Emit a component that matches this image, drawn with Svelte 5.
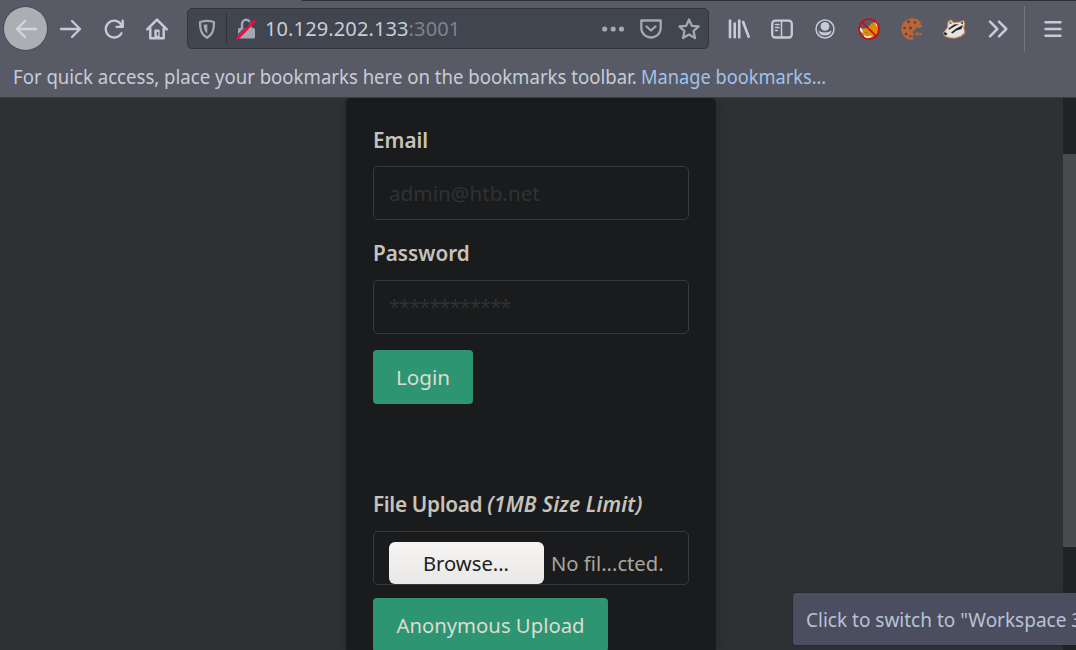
<script>
  const url = { host: '10.129.202.133', port: ':3001' };
</script>

<div class="window">
  <header>
    <div class="tabline"></div>
    <nav>
      <button class="back" aria-label="Back">
        <svg viewBox="0 0 24 24"><path d="M22 12H3M11 4L3 12l8 8" /></svg>
      </button>
      <button class="tool" aria-label="Forward">
        <svg viewBox="0 0 24 24"><path d="M2 12h19M13 4l8 8-8 8" /></svg>
      </button>
      <button class="tool" aria-label="Reload">
        <svg viewBox="0 0 24 24"><path d="M19.5 16.2A8.4 8.4 0 1 1 18.6 6.700M20.700 3.600v6.200h-6.200" /><path class="fill" d="M21.500 4.500v6h-6z" /></svg>
      </button>
      <button class="tool" aria-label="Home">
        <svg viewBox="0 0 24 24"><path d="M2.200 12.400L12 2.600l9.800 9.800M5.300 11.400v9.800h13.400v-9.800" stroke-width="2.500" /><path class="fill" d="M9.300 21v-7.200q0-1.300 1.300-1.300h2.800q1.300 0 1.300 1.300V21z" /><path d="M12.600 15.500v2.400" stroke="#585a66" stroke-width="1.600" /></svg>
      </button>

      <div class="address">
        <span class="shield">
          <svg viewBox="0 0 24 24"><path d="M12 3.800c2 0 4.400.5 7 1.200 0 7-.8 12-7 15.800C5.800 17 5 12 5 5c2.600-.7 5-1.200 7-1.200z" stroke-width="2.300" /><path class="fill" d="M12.300 7.200v9.600C9.500 14.500 8.700 12 8.600 7.800z" /></svg>
        </span>
        <span class="lock">
          <svg viewBox="0 0 24 24"><path d="M8 12V7a4.200 4.200 0 0 1 8.400 0v4" stroke-width="2.500" /><path class="fill" d="M4 12.500q0-1.500 1.500-1.500h14q1.500 0 1.500 1.500V20q0 1.500-1.500 1.500H5.500Q4 21.500 4 20z" /><path d="M3 19L18 3.700" stroke="#404550" stroke-width="1.200" /><path d="M3.500 21.500L20.500 4" stroke="#f00a45" stroke-width="2.600" /></svg>
        </span>
        <span class="host">{url.host}<span>{url.port}</span></span>
        <span class="actions">
          <svg viewBox="0 0 24 24"><g class="fill"><circle cx="3.700" cy="12" r="2.600" /><circle cx="12.200" cy="12" r="2.600" /><circle cx="20.500" cy="12" r="2.600" /></g></svg>
          <svg viewBox="0 0 24 24"><path d="M2.300 3.500h19.400v7.500a9.700 9.500 0 0 1-19.400 0zM7.500 9.500l4.500 4 4.500-4" /></svg>
          <svg viewBox="0 0 24 24"><path d="M12 2.500l2.800 6.300 6.800.7-5.100 4.600 1.500 7-6-3.600-6 3.600 1.500-7-5.100-4.600 6.800-.7z" /></svg>
        </span>
      </div>

      <button class="tool library" aria-label="Library">
        <svg viewBox="0 0 24 24"><path d="M3 2.500v18.700M7.700 5.500v15.700M12.200 2.500v18.700M15.800 4L22 20.700" stroke-width="2.600" stroke-linecap="butt" /></svg>
      </button>
      <button class="tool" aria-label="Sidebar">
        <svg viewBox="0 0 24 24"><rect x="2.200" y="3.700" width="19.600" height="16.800" rx="3" /><path d="M11.500 4v16M5.500 7.500h3.500M5.500 10.500h3.500M5.500 13.500h2" stroke-width="1.500" /></svg>
      </button>
      <button class="tool" aria-label="Account">
        <svg viewBox="0 0 24 24"><circle cx="12" cy="12" r="9" stroke-width="1.500" /><circle class="fill" cx="12" cy="9.400" r="4.400" /><path class="fill" d="M5.500 13.500q2.500 2 6.500 2t6.500-2c-.3 3-2.800 5-6.500 5s-6.200-2-6.500-5z" /></svg>
      </button>
      <button class="tool fox" aria-label="FoxyProxy">
        <svg viewBox="0 0 24 24"><g stroke="none"><path fill="#e08a09" d="M4 12l6-1 5-5 5-1 1 6-.5 5-4.500 4.500-7 1.500-4-5z" /><path fill="#eee" d="M1.800 10l3 1.500 1.500 4.500-2.500-1zM18 5.500l2.300-1 .5 6-1.500-1.500zM7 18l3 1.500 4-1 1 1-4 2-4-1z" /><path fill="#8b5520" d="M8 15l2 .3-.5 1zM13.500 14l2-1-.5 1.500z" /></g><circle cx="12" cy="12" r="10" stroke="#c80d19" stroke-width="1.600" /><path d="M5 5l14 14" stroke="#c80d19" stroke-width="1.700" /></svg>
      </button>
      <button class="tool" aria-label="Cookies">
        <svg viewBox="0 0 24 24"><g stroke="none"><path fill="#b66639" d="M18 2.800C12-.5 5 2 2.300 7.500c-3 7 1 14 8 15.300 1.300.2 3-.1 3.200-.8l-1.200-3 2.300-1.200-2.300-2.800 2.900-2.300 1.200-2.400 3.400 1 3-2.500-2-1-.5-3z" /><g fill="#6a3a29"><circle cx="8.500" cy="4.700" r="1.400" /><circle cx="15" cy="5.500" r="1.200" /><circle cx="4.500" cy="11" r="1.300" /><circle cx="10.500" cy="11" r="1.400" /><circle cx="6" cy="17" r="1.300" /><circle cx="10.500" cy="19" r="1" /></g><path fill="#b66639" d="M15 16l2-1 2 2-2 2zM19 16h3v2h-3z" /></g></svg>
      </button>
      <button class="tool badger" aria-label="Privacy Badger">
        <svg viewBox="0 0 24 24"><g stroke-linejoin="round"><path d="M1 16.500L5.500 10.500 6 5l3-2 2.500 2.500 6-.5L21.500 3.500l1.200 3-.9 4 1 5.500-4 3.200-6 2-5.300-.5-4.500-1.500z" fill="#e5e4df" stroke="#c98c5b" stroke-width="1.100" /><path fill="#242629" stroke="none" d="M1.500 17l1-2 3 1.500-1.500 2zM6.500 11.500l5.500-4 5-.5-5 2.700-5 3zM9 15.500l6-4.500 6-3-1.500 4-5 1.500-4 3zM7 6l2-1 .5 2zM18.500 6l2.200-1.500.2 2.700z" /></g></svg>
      </button>
      <button class="tool" aria-label="More tools">
        <svg viewBox="0 0 24 24"><path d="M4 4.700l7.300 7.300L4 19.300M13 4.700l7.300 7.300L13 19.300" stroke-width="2.500" /></svg>
      </button>
      <span class="divider"></span>
      <button class="tool menu" aria-label="Menu">
        <svg viewBox="0 0 24 24"><path d="M4.500 5.200h15M4.500 12h15M4.500 18.700h15" stroke-width="2.500" /></svg>
      </button>
    </nav>
    <p class="bookmarks">
      <span class="hint"><span>For quick access, place your bookmarks here on the bookmarks toolbar.</span></span>
      <span class="manage">Manage bookmarks…</span>
    </p>
  </header>

  <main>
    <section class="card">
      <div class="label first">Email</div>
      <div class="field"><span class="email">admin@htb.net</span></div>
      <div class="label second">Password</div>
      <div class="field"><span class="stars">************</span></div>
      <button class="primary login">Login</button>
      <div class="label upload">File Upload <em>(1MB Size Limit)</em></div>
      <div class="field file">
        <button class="browse">Browse...</button>
        <span class="chosen">No fil...cted.</span>
      </div>
      <button class="primary anonymous">Anonymous Upload</button>
    </section>
    <div class="scrollbar"><div class="thumb"></div></div>
  </main>
  <div class="tooltip"><span>Click to switch to "Workspace 3"</span></div>
</div>

<style>
  :global(body) { margin: 0; overflow: hidden; }
  .window {
    position: relative;
    width: 1076px;
    height: 650px;
    display: flex;
    flex-direction: column;
    overflow: hidden;
    background: #2d3134;
    font: 20px/28px "Noto Sans", sans-serif;
    white-space: nowrap;
  }
  .window * { box-sizing: border-box; }
  button { padding: 0; border: 0; background: none; font: inherit; }
  header { height: 98px; flex: none; background: #585a66; border-bottom: 1px solid #3b3e4a; }
  .tabline { height: 1px; margin-left: 302px; background: #2b2d39; }
  nav { display: flex; align-items: center; height: 55px; }
  svg { display: block; width: 24px; height: 24px; fill: none; stroke: #c5cbd6; stroke-width: 2.300; stroke-linecap: round; stroke-linejoin: round; }
  .fill { fill: #c5cbd6; stroke: none; }
  .back {
    display: grid;
    place-items: center;
    width: 43px;
    height: 43px;
    margin: 0 2px 0 4px;
    border-radius: 50%;
    background: #acaeb4;
    box-shadow: 0 0 0 1px #4b4d58;
  }
  .back svg { stroke: #d0d7dd; }
  .tool { display: grid; place-items: center; flex: none; width: 43px; height: 43px; }
  .address {
    display: flex;
    align-items: center;
    width: 522px;
    height: 41px;
    margin: 0 8px 0 9px;
    border: 1px solid #31343f;
    border-radius: 5px;
    background: #404550;
  }
  .address svg { stroke: #a2a7b2; }
  .address .fill { fill: #a2a7b2; }
  .shield { display: grid; place-items: center; width: 39px; height: 31px; border-right: 1px solid #2f323d; }
  .lock { margin: 0 7px 0 7px; }
  .host { color: #c8ced9; letter-spacing: 0.120px; }
  .host span { color: #7f838e; }
  .actions { display: flex; gap: 14px; margin: 0 7px 0 auto; }
  .fox { margin-left: 1px; }
  .badger { padding-right: 2px; }
  .divider { width: 1px; height: 46px; margin-left: 5px; background: #747681; }
  .menu { margin-left: 6px; }
  .bookmarks { display: flex; margin: 7px 0 0 13px; color: #c8ccd8; }
  .hint { width: 628px; }
  .hint span, .manage { display: inline-block; transform: scaleX(0.929); transform-origin: left; }
  .manage { color: #a1c2e9; transform: scaleX(0.911); }
  main { flex: 1; display: flex; min-height: 0; }
  .card {
    width: 370px;
    height: 552px;
    margin-left: 346px;
    padding: 28px 27px 0;
    border-radius: 5px 5px 0 0;
    background: #1a1b1c;
    box-shadow: 0 0 8px #25292b;
    color: #c8c3ba;
    font-size: 20.700px;
    clip-path: inset(0 -10px);
  }
  .label { height: 41px; font-weight: 600; }
  .label.first { height: 40px; }
  .label.second { margin-top: 19px; }
  .label.upload { margin-top: 86px; font-size: 20.800px; letter-spacing: -0.350px; }
  .label em { letter-spacing: 0.150px; }
  .field {
    display: flex;
    align-items: center;
    width: 316px;
    height: 54px;
    padding: 0 15px;
    border: 1px solid #37393b;
    border-radius: 5px;
    color: #303233;
  }
  .stars { font-size: 20px; letter-spacing: -0.900px; }
  .primary {
    display: block;
    height: 54px;
    border-radius: 4px;
    background: #2e9572;
    color: #dedbd3;
  }
  .login { width: 100px; margin-top: 16px; }
  .anonymous { width: 235px; margin-top: 13px; font-size: 20.300px; }
  .file { align-items: flex-start; padding-top: 10px; overflow: hidden; color: #aaa59c; font-size: 20.200px; }
  .browse {
    width: 155px;
    height: 42px;
    margin-right: 7px;
    padding: 0 1px 1px 0;
    border-radius: 6px;
    background: linear-gradient(#f6f5f4, #e9e8e7);
    color: #202020;
  }
  .chosen { margin-top: 7px; }
  .scrollbar { width: 13px; height: 552px; margin-left: auto; padding-top: 56px; background: #202324; }
  .thumb { height: 393px; background: #484c4e; }
  .tooltip {
    position: absolute;
    left: 793px;
    top: 593px;
    width: 300px;
    height: 52px;
    padding: 13px;
    border-radius: 3px;
    background: #4b4e5f;
    color: #b7c2d7;
    box-shadow: 0 0 3px #22252a;
  }
  .tooltip span { display: inline-block; transform: scaleX(0.950); transform-origin: left; }
</style>
